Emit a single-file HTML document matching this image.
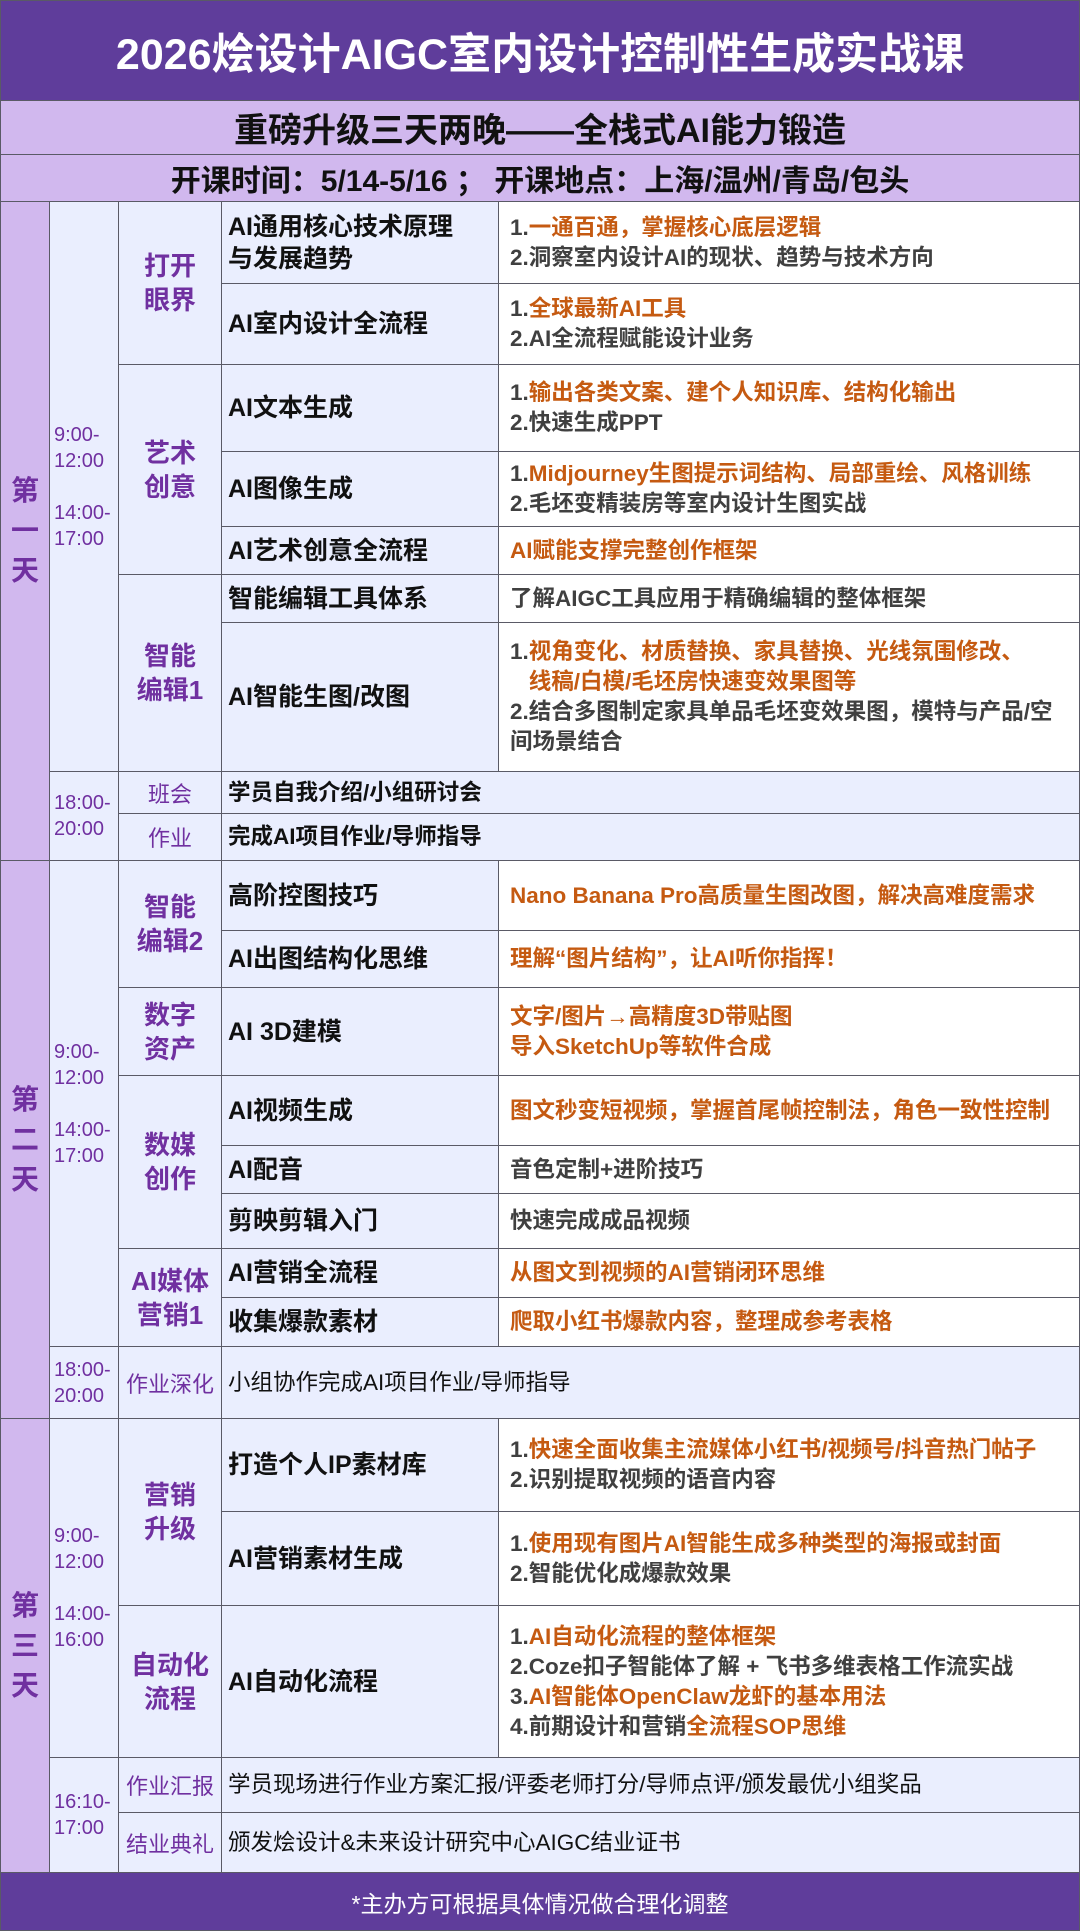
<!DOCTYPE html>
<html><head><meta charset="utf-8">
<style>
*{margin:0;padding:0;box-sizing:border-box}
body{width:1080px;height:1931px;position:relative;background:#fff;font-family:"Liberation Sans","Noto Sans CJK SC",sans-serif;overflow:hidden}
.c{position:absolute;border:1px solid #5a5a66;display:flex;align-items:center;background:#eaeefe;color:#111}
.h{justify-content:center}
.pl{background:#d1b8ee}
.w{background:#fff}
.day{justify-content:center;color:#7030a0;font-weight:bold;font-size:28px;line-height:40px;text-align:center}
.tm{justify-content:flex-start;color:#7030a0;font-size:20px;line-height:26px;padding-left:4px}
.tp{justify-content:center;text-align:center;color:#7030a0;font-weight:bold;font-size:26px;line-height:34px}
.tpn{justify-content:center;color:#7030a0;font-size:22px}
.d{padding-left:6px;font-weight:bold;font-size:25px;line-height:32px;color:#111}
.e{padding-left:11px;padding-right:4px;font-weight:bold;font-size:22.5px;line-height:30px;color:#404040}
.m{font-size:22.5px}
.n{font-weight:normal;color:#111;font-size:22.5px}
.o{color:#c55a11}
</style></head><body>
<div class="c h" style="left:0;top:0;width:1080px;height:101px;background:#5f3d9b;color:#fff;font-weight:bold;font-size:43px">2026烩设计AIGC室内设计控制性生成实战课</div>
<div class="c h pl" style="left:0;top:100px;width:1080px;height:55px;font-weight:bold;font-size:34px">重磅升级三天两晚——全栈式AI能力锻造</div>
<div class="c h pl" style="left:0;top:154px;width:1080px;height:48px;font-weight:bold;font-size:30px">开课时间：5/14-5/16 ； 开课地点：上海/温州/青岛/包头</div>

<!-- Day 1 -->
<div class="c day pl" style="left:0;top:201px;width:50px;height:660px">第<br>一<br>天</div>
<div class="c tm" style="left:49px;top:201px;width:70px;height:571px">9:00-<br>12:00<br><br>14:00-<br>17:00</div>
<div class="c tm" style="left:49px;top:771px;width:70px;height:90px">18:00-<br>20:00</div>
<div class="c tp" style="left:118px;top:201px;width:104px;height:164px">打开<br>眼界</div>
<div class="c tp" style="left:118px;top:364px;width:104px;height:211px">艺术<br>创意</div>
<div class="c tp" style="left:118px;top:574px;width:104px;height:198px">智能<br>编辑1</div>
<div class="c tpn" style="left:118px;top:771px;width:104px;height:43px">班会</div>
<div class="c tpn" style="left:118px;top:813px;width:104px;height:48px">作业</div>

<div class="c d" style="left:221px;top:201px;width:278px;height:83px">AI通用核心技术原理<br>与发展趋势</div>
<div class="c d" style="left:221px;top:283px;width:278px;height:82px">AI室内设计全流程</div>
<div class="c d" style="left:221px;top:364px;width:278px;height:88px">AI文本生成</div>
<div class="c d" style="left:221px;top:451px;width:278px;height:76px">AI图像生成</div>
<div class="c d" style="left:221px;top:526px;width:278px;height:49px">AI艺术创意全流程</div>
<div class="c d" style="left:221px;top:574px;width:278px;height:49px">智能编辑工具体系</div>
<div class="c d" style="left:221px;top:622px;width:278px;height:150px">AI智能生图/改图</div>

<div class="c e w" style="left:498px;top:201px;width:582px;height:83px"><div>1.<span class="o">一通百通，掌握核心底层逻辑</span><br>2.洞察室内设计AI的现状、趋势与技术方向</div></div>
<div class="c e w" style="left:498px;top:283px;width:582px;height:82px"><div>1.<span class="o">全球最新AI工具</span><br>2.AI全流程赋能设计业务</div></div>
<div class="c e w" style="left:498px;top:364px;width:582px;height:88px"><div>1.<span class="o">输出各类文案、建个人知识库、结构化输出</span><br>2.快速生成PPT</div></div>
<div class="c e w" style="left:498px;top:451px;width:582px;height:76px"><div>1.<span class="o">Midjourney生图提示词结构、局部重绘、风格训练</span><br>2.毛坯变精装房等室内设计生图实战</div></div>
<div class="c e w" style="left:498px;top:526px;width:582px;height:49px"><div class="o">AI赋能支撑完整创作框架</div></div>
<div class="c e w" style="left:498px;top:574px;width:582px;height:49px"><div>了解AIGC工具应用于精确编辑的整体框架</div></div>
<div class="c e w" style="left:498px;top:622px;width:582px;height:150px"><div>1.<span class="o">视角变化、材质替换、家具替换、光线氛围修改、<br>&nbsp;&nbsp;&nbsp;线稿/白模/毛坯房快速变效果图等</span><br>2.结合多图制定家具单品毛坯变效果图，模特与产品/空<br>间场景结合</div></div>
<div class="c d m" style="left:221px;top:771px;width:859px;height:43px">学员自我介绍/小组研讨会</div>
<div class="c d m" style="left:221px;top:813px;width:859px;height:48px">完成AI项目作业/导师指导</div>

<!-- Day 2 -->
<div class="c day pl" style="left:0;top:860px;width:50px;height:559px">第<br>二<br>天</div>
<div class="c tm" style="left:49px;top:860px;width:70px;height:487px">9:00-<br>12:00<br><br>14:00-<br>17:00</div>
<div class="c tm" style="left:49px;top:1346px;width:70px;height:73px">18:00-<br>20:00</div>
<div class="c tp" style="left:118px;top:860px;width:104px;height:128px">智能<br>编辑2</div>
<div class="c tp" style="left:118px;top:987px;width:104px;height:89px">数字<br>资产</div>
<div class="c tp" style="left:118px;top:1075px;width:104px;height:174px">数媒<br>创作</div>
<div class="c tp" style="left:118px;top:1248px;width:104px;height:99px">AI媒体<br>营销1</div>
<div class="c tpn" style="left:118px;top:1346px;width:104px;height:73px">作业深化</div>

<div class="c d" style="left:221px;top:860px;width:278px;height:71px">高阶控图技巧</div>
<div class="c d" style="left:221px;top:930px;width:278px;height:58px">AI出图结构化思维</div>
<div class="c d" style="left:221px;top:987px;width:278px;height:89px">AI 3D建模</div>
<div class="c d" style="left:221px;top:1075px;width:278px;height:71px">AI视频生成</div>
<div class="c d" style="left:221px;top:1145px;width:278px;height:49px">AI配音</div>
<div class="c d" style="left:221px;top:1193px;width:278px;height:56px">剪映剪辑入门</div>
<div class="c d" style="left:221px;top:1248px;width:278px;height:50px">AI营销全流程</div>
<div class="c d" style="left:221px;top:1297px;width:278px;height:50px">收集爆款素材</div>

<div class="c e w" style="left:498px;top:860px;width:582px;height:71px"><div class="o">Nano Banana Pro高质量生图改图，解决高难度需求</div></div>
<div class="c e w" style="left:498px;top:930px;width:582px;height:58px"><div class="o">理解“图片结构”，让AI听你指挥！</div></div>
<div class="c e w" style="left:498px;top:987px;width:582px;height:89px"><div class="o">文字/图片→高精度3D带贴图<br>导入SketchUp等软件合成</div></div>
<div class="c e w" style="left:498px;top:1075px;width:582px;height:71px"><div class="o">图文秒变短视频，掌握首尾帧控制法，角色一致性控制</div></div>
<div class="c e w" style="left:498px;top:1145px;width:582px;height:49px"><div>音色定制+进阶技巧</div></div>
<div class="c e w" style="left:498px;top:1193px;width:582px;height:56px"><div>快速完成成品视频</div></div>
<div class="c e w" style="left:498px;top:1248px;width:582px;height:50px"><div class="o">从图文到视频的AI营销闭环思维</div></div>
<div class="c e w" style="left:498px;top:1297px;width:582px;height:50px"><div class="o">爬取小红书爆款内容，整理成参考表格</div></div>
<div class="c d n" style="left:221px;top:1346px;width:859px;height:73px">小组协作完成AI项目作业/导师指导</div>

<!-- Day 3 -->
<div class="c day pl" style="left:0;top:1418px;width:50px;height:455px">第<br>三<br>天</div>
<div class="c tm" style="left:49px;top:1418px;width:70px;height:340px">9:00-<br>12:00<br><br>14:00-<br>16:00</div>
<div class="c tm" style="left:49px;top:1757px;width:70px;height:116px">16:10-<br>17:00</div>
<div class="c tp" style="left:118px;top:1418px;width:104px;height:188px">营销<br>升级</div>
<div class="c tp" style="left:118px;top:1605px;width:104px;height:153px">自动化<br>流程</div>
<div class="c tpn" style="left:118px;top:1757px;width:104px;height:56px">作业汇报</div>
<div class="c tpn" style="left:118px;top:1812px;width:104px;height:61px">结业典礼</div>

<div class="c d" style="left:221px;top:1418px;width:278px;height:94px">打造个人IP素材库</div>
<div class="c d" style="left:221px;top:1511px;width:278px;height:95px">AI营销素材生成</div>
<div class="c d" style="left:221px;top:1605px;width:278px;height:153px">AI自动化流程</div>
<div class="c e w" style="left:498px;top:1418px;width:582px;height:94px"><div>1.<span class="o">快速全面收集主流媒体小红书/视频号/抖音热门帖子</span><br>2.识别提取视频的语音内容</div></div>
<div class="c e w" style="left:498px;top:1511px;width:582px;height:95px"><div>1.<span class="o">使用现有图片AI智能生成多种类型的海报或封面</span><br>2.智能优化成爆款效果</div></div>
<div class="c e w" style="left:498px;top:1605px;width:582px;height:153px"><div>1.<span class="o">AI自动化流程的整体框架</span><br>2.Coze扣子智能体了解 + 飞书多维表格工作流实战<br>3.<span class="o">AI智能体OpenClaw龙虾的基本用法</span><br>4.前期设计和营销<span class="o">全流程SOP思维</span></div></div>
<div class="c d n" style="left:221px;top:1757px;width:859px;height:56px">学员现场进行作业方案汇报/评委老师打分/导师点评/颁发最优小组奖品</div>
<div class="c d n" style="left:221px;top:1812px;width:859px;height:61px">颁发烩设计&amp;未来设计研究中心AIGC结业证书</div>

<div class="c h" style="left:0;top:1872px;width:1080px;height:59px;background:#5f3d9b;color:#fff;font-size:23px">*主办方可根据具体情况做合理化调整</div>
</body></html>
